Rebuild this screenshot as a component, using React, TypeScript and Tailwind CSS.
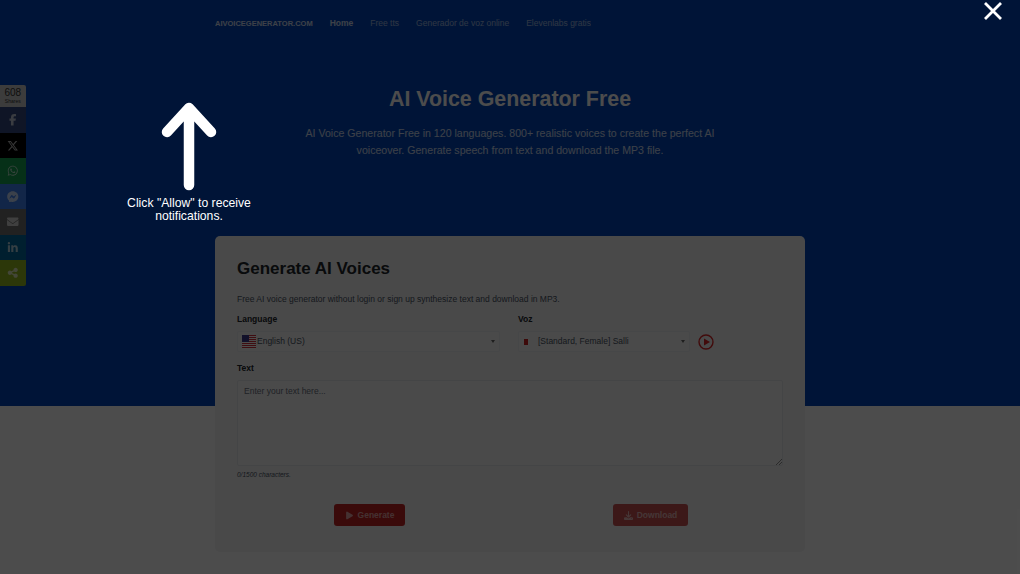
import { FaFacebookF, FaXTwitter, FaWhatsapp, FaFacebookMessenger, FaEnvelope, FaLinkedinIn, FaShareNodes, FaPlay, FaDownload } from 'react-icons/fa6'
import type { ReactNode } from 'react'

const shares: { icon: ReactNode; bg: string }[] = [
  { icon: <FaFacebookF />, bg: 'bg-[#33497f]' },
  { icon: <FaXTwitter />, bg: 'bg-black' },
  { icon: <FaWhatsapp />, bg: 'bg-[#14a050]' },
  { icon: <FaFacebookMessenger />, bg: 'bg-[#3f80f0]' },
  { icon: <FaEnvelope />, bg: 'bg-[#6f6f6f]' },
  { icon: <FaLinkedinIn />, bg: 'bg-[#006a9f]' },
  { icon: <FaShareNodes />, bg: 'bg-[#95b820]' },
]

function Flag() {
  return (
    <svg width="14" height="14" viewBox="0 0 14 14" className="shrink-0">
      <rect width="14" height="14" fill="#fff" />
      {[0, 2, 4, 6, 8, 10, 12].map(y => (
        <rect key={y} y={y} width="14" height="1" fill="#d22f3c" />
      ))}
      <rect width="7" height="7" fill="#3c3b8e" />
    </svg>
  )
}

export default function App() {
  return (
    <div className="relative h-[574px] w-[1020px] overflow-hidden bg-white font-['Liberation_Sans',Arial,sans-serif] text-[#212529]">
      {/* hero, card hangs out below it */}
      <div className="h-[406px] bg-[#0044b8]">
        <nav className="ml-[215px] flex h-[47px] items-center gap-[17px] text-[8.5px] text-white">
          <span className="text-[7.5px] font-bold opacity-80">AIVOICEGENERATOR.COM</span>
          <span className="font-bold opacity-80">Home</span>
          <span className="opacity-60">Free tts</span>
          <span className="opacity-60">Generador de voz online</span>
          <span className="opacity-60">Elevenlabs gratis</span>
        </nav>
        <h1 className="mt-[38px] text-center text-[21.4px] leading-[28px] font-bold text-white">AI Voice Generator Free</h1>
        <p className="mx-auto mt-[12px] w-[430px] text-center text-[10.6px] leading-[17px] text-white/80">
          AI Voice Generator Free in 120 languages. 800+ realistic voices to create the perfect AI voiceover. Generate speech from text and download the MP3 file.
        </p>

        <div className="mx-auto mt-[77px] h-[316px] w-[590px] rounded-[5px] bg-[#f3f4f6] px-[22px] pt-[22px]">
          <h2 className="text-[17px] leading-[22px] font-bold">Generate AI Voices</h2>
          <p className="mt-[14px] text-[8.5px] leading-[10px] text-[#4b5563]">
            Free AI voice generator without login or sign up synthesize text and download in MP3.
          </p>
          <div className="mt-[10px] flex">
            <div className="w-[263px]">
              <div className="text-[8.5px] leading-[10px] font-bold">Language</div>
              <div className="mt-[7px] flex h-[21px] items-center rounded-[2px] border border-[#eceef0] bg-[#f8f8f9] pr-[4px] pl-[4px] text-[8.5px] text-[#4b5563]">
                <Flag />
                <span className="ml-[1px]">English (US)</span>
                <span className="ml-auto h-0 w-0 border-x-[2px] border-t-[3px] border-x-transparent border-t-[#666]" />
              </div>
            </div>
            <div className="ml-[18px]">
              <div className="text-[8.5px] leading-[10px] font-bold">Voz</div>
              <div className="mt-[7px] flex items-center gap-[8px]">
                <div className="flex h-[21px] w-[172px] items-center rounded-[2px] border border-[#eceef0] bg-[#f8f8f9] pr-[4px] pl-[5px] text-[8.5px] text-[#4b5563]">
                  <span className="h-[6px] w-[4px] bg-[#c22]" />
                  <span className="ml-[10px]">[Standard, Female] Salli</span>
                  <span className="ml-auto h-0 w-0 border-x-[2px] border-t-[3px] border-x-transparent border-t-[#666]" />
                </div>
                <svg width="16" height="16" viewBox="0 0 16 16">
                  <circle cx="8" cy="8" r="7" fill="none" stroke="#dc2626" strokeWidth="1.4" />
                  <path d="M6 4.5 L12 8 L6 11.5 Z" fill="#dc2626" />
                </svg>
              </div>
            </div>
          </div>
          <div className="mt-[11px] text-[8.5px] leading-[10px] font-bold">Text</div>
          <div className="relative mt-[7px] h-[86px] rounded-[2px] border border-[#e5e7eb] bg-[#f8f8f9] px-[6px] pt-[5px] text-[8.5px] leading-[10px] text-[#6b7280]">
            Enter your text here...
            <svg width="6" height="6" viewBox="0 0 6 6" className="absolute right-0 bottom-0">
              <path d="M0 6 L6 0 M3 6 L6 3" stroke="#777" strokeWidth="0.8" />
            </svg>
          </div>
          <div className="mt-[5px] text-[6.5px] leading-[8px] text-[#4b5563] italic">0/1500 characters.</div>
          <div className="mt-[25px] flex">
            <button className="ml-[97px] flex h-[22px] w-[71px] items-center justify-center gap-[4px] rounded-[3px] bg-[#c42222] text-[8.5px] font-bold text-white/60">
              <FaPlay className="text-[9px]" /> Generate
            </button>
            <button className="ml-[208px] flex h-[22px] w-[75px] items-center justify-center gap-[4px] rounded-[3px] bg-[#c85050] text-[8.5px] font-bold text-white/60">
              <FaDownload className="text-[9px]" /> Download
            </button>
          </div>
        </div>
      </div>

      {/* floating share bar */}
      <div className="absolute top-[85px] left-0 w-[25.5px] overflow-hidden rounded-r-[2px] text-white">
        <div className="flex h-[22px] flex-col items-center justify-center bg-[#c8c8c8] text-[#333]">
          <span className="text-[10px] leading-[10px]">608</span>
          <span className="text-[5px] leading-[6px]">Shares</span>
        </div>
        {shares.map((s, i) => (
          <div key={i} className={`flex h-[25.5px] items-center justify-center text-[11.5px] ${s.bg}`}>
            <span className="opacity-70">{s.icon}</span>
          </div>
        ))}
      </div>

      {/* notification prompt overlay */}
      <div className="absolute inset-0 bg-black/70">
        <svg width="60" height="94" viewBox="0 0 60 94" className="absolute top-[99px] left-[159px]">
          <path d="M30 9 V86 M8 33 L30 9 L52 33" fill="none" stroke="#fff" strokeWidth="10.5" strokeLinecap="round" strokeLinejoin="round" />
        </svg>
        <div className="absolute top-[197px] left-[119px] w-[140px] text-center text-[12.2px] leading-[13px] text-white">
          Click "Allow" to receive notifications.
        </div>
        <svg width="20" height="20" viewBox="0 0 20 20" className="absolute top-[1px] left-[983px]">
          <path d="M2 2 L18 18 M18 2 L2 18" stroke="#fff" strokeWidth="2.8" />
        </svg>
      </div>
    </div>
  )
}
